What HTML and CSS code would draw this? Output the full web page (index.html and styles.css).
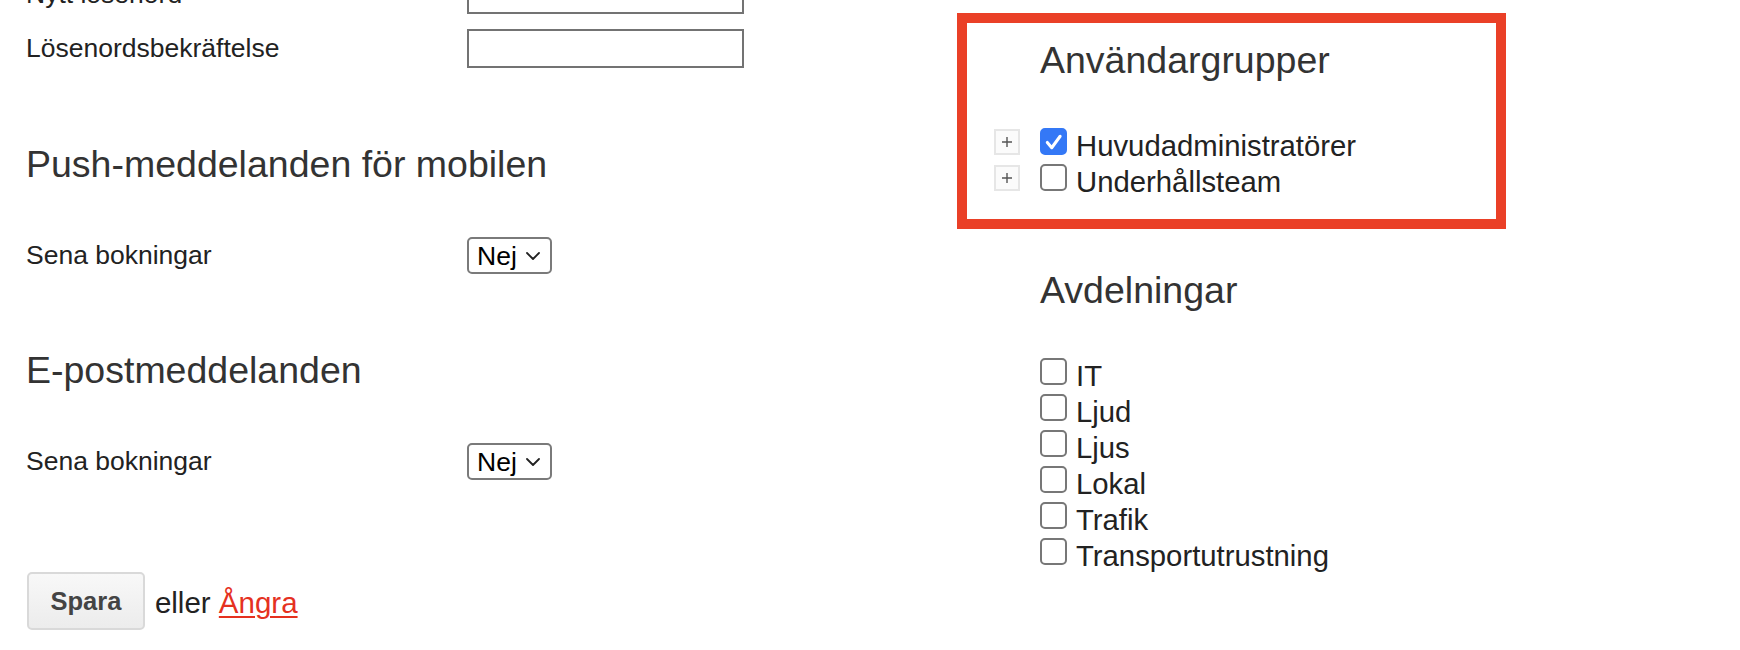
FILE: index.html
```html
<!DOCTYPE html>
<html lang="sv">
<head>
<meta charset="utf-8">
<title>Profilinställningar</title>
<link rel="stylesheet" href="styles.css">
</head>
<body>
<div class="page">
  <div class="main-col">
    <div class="field-row first-row">
      <label class="field-label" for="pw">Nytt lösenord</label>
      <input class="text-input" id="pw" type="password">
    </div>
    <div class="field-row">
      <label class="field-label" for="pw2">Lösenordsbekräftelse</label>
      <input class="text-input" id="pw2" type="password">
    </div>

    <h2 class="section-title">Push-meddelanden för mobilen</h2>
    <div class="field-row">
      <label class="field-label" for="push-late">Sena bokningar</label>
      <div class="select-wrap">
        <select class="select" id="push-late"><option>Nej</option><option>Ja</option></select>
        <svg class="chevron" width="14" height="8" viewBox="0 0 14 8"><path d="M1 1 L7 7 L13 1" fill="none" stroke="#222" stroke-width="1.8" stroke-linecap="round" stroke-linejoin="round"/></svg>
      </div>
    </div>

    <h2 class="section-title">E-postmeddelanden</h2>
    <div class="field-row">
      <label class="field-label" for="mail-late">Sena bokningar</label>
      <div class="select-wrap">
        <select class="select" id="mail-late"><option>Nej</option><option>Ja</option></select>
        <svg class="chevron" width="14" height="8" viewBox="0 0 14 8"><path d="M1 1 L7 7 L13 1" fill="none" stroke="#222" stroke-width="1.8" stroke-linecap="round" stroke-linejoin="round"/></svg>
      </div>
    </div>

    <div class="actions">
      <button class="btn" type="button">Spara</button>
      <span class="or-text">eller <a class="undo" href="#">Ångra</a></span>
    </div>
  </div>

  <div class="side-col">
    <section class="group-box">
      <h2 class="section-title side-title">Användargrupper</h2>
      <ul class="check-list">
        <li class="check-item">
          <span class="expander"><svg width="12" height="12" viewBox="0 0 12 12"><path d="M6 1 V11 M1 6 H11" fill="none" stroke="#555" stroke-width="1.4"/></svg></span>
          <span class="box checked"><svg width="26" height="26" viewBox="0 0 26 26"><path d="M6 13.5 L11 19.5 L20.5 6.5" fill="none" stroke="#fff" stroke-width="3.4" stroke-linecap="round" stroke-linejoin="round"/></svg></span>
          <span class="check-label">Huvudadministratörer</span>
        </li>
        <li class="check-item">
          <span class="expander"><svg width="12" height="12" viewBox="0 0 12 12"><path d="M6 1 V11 M1 6 H11" fill="none" stroke="#555" stroke-width="1.4"/></svg></span>
          <span class="box"></span>
          <span class="check-label">Underhållsteam</span>
        </li>
      </ul>
    </section>

    <section class="dept-section">
      <h2 class="section-title side-title">Avdelningar</h2>
      <ul class="check-list">
        <li class="check-item"><span class="box"></span><span class="check-label">IT</span></li>
        <li class="check-item"><span class="box"></span><span class="check-label">Ljud</span></li>
        <li class="check-item"><span class="box"></span><span class="check-label">Ljus</span></li>
        <li class="check-item"><span class="box"></span><span class="check-label">Lokal</span></li>
        <li class="check-item"><span class="box"></span><span class="check-label">Trafik</span></li>
        <li class="check-item"><span class="box"></span><span class="check-label">Transportutrustning</span></li>
      </ul>
    </section>
  </div>
</div>
</body>
</html>
```

FILE: styles.css
```css
* {
  box-sizing: border-box;
}

html, body {
  margin: 0;
  padding: 0;
  background: #ffffff;
  overflow: hidden;
}

body {
  font-family: "Liberation Sans", Arial, Helvetica, sans-serif;
  font-size: 29px;
  color: #222222;
}

.page {
  display: flex;
  align-items: flex-start;
  padding-left: 26px;
}

.main-col {
  flex: none;
  width: 931px;
  margin-top: -25px;
}

.side-col {
  flex: none;
  width: 549px;
  padding-top: 13px;
}

/* form rows */
.field-row {
  display: flex;
  align-items: center;
  min-height: 37px;
}

.first-row {
  margin-bottom: 15px;
}

.field-label {
  flex: none;
  width: 441px;
  font-size: 26.5px;
  color: #222222;
}

.text-input {
  width: 277px;
  height: 39px;
  border: 2px solid #737373;
  border-radius: 0;
  background: #ffffff;
  padding: 0 6px;
  font: inherit;
  font-size: 26px;
  outline: none;
}

.section-title {
  margin: 75px 0 52px;
  font-size: 37.5px;
  line-height: 42px;
  font-weight: normal;
  color: #333333;
}

/* select */
.select-wrap {
  position: relative;
  width: 85px;
  height: 37px;
}

.select {
  -webkit-appearance: none;
  appearance: none;
  width: 85px;
  height: 37px;
  border: 2px solid #7a7a7a;
  border-radius: 5px;
  background: #ffffff;
  padding: 0 0 0 8px;
  font-family: "Liberation Sans", Arial, Helvetica, sans-serif;
  font-size: 26.5px;
  color: #000000;
  outline: none;
}

.chevron {
  position: absolute;
  right: 12px;
  top: 15px;
  pointer-events: none;
}

/* actions */
.actions {
  display: flex;
  align-items: center;
  margin-top: 92px;
  padding-left: 1px;
}

.btn {
  height: 58px;
  padding: 0 21.5px;
  margin-right: 10px;
  border: 2px solid #d9d9d9;
  border-radius: 5px;
  background: linear-gradient(#f8f8f8, #ececec);
  font-family: "Liberation Sans", Arial, Helvetica, sans-serif;
  font-size: 25.5px;
  font-weight: bold;
  color: #444444;
}

.or-text {
  font-size: 29.5px;
  color: #222222;
  padding-top: 4px;
}

.undo {
  color: #e5311f;
  text-decoration: underline;
  text-decoration-thickness: 2px;
  text-underline-offset: 3px;
}

/* right column */
.group-box {
  border: 10px solid #ea4027;
  padding: 16px 0 19px 73px;
}

.side-title {
  margin: 0 0 47px;
}

.dept-section {
  margin-top: 40px;
  padding-left: 83px;
}

.check-list {
  list-style: none;
  margin: 0;
  padding: 0;
}

.check-item {
  display: flex;
  align-items: flex-start;
  height: 36px;
  line-height: 36px;
  font-size: 29.3px;
  color: #222222;
}

.expander {
  flex: none;
  width: 26px;
  height: 26px;
  margin: 1px 20px 0 -46px;
  border: 2px solid #e6e6e6;
  background: #fbfbfb;
  display: flex;
  align-items: center;
  justify-content: center;
}

.box {
  flex: none;
  width: 27px;
  height: 27px;
  margin: 0 9px 0 0;
  border: 2px solid #777777;
  border-radius: 5px;
  background: #ffffff;
  display: flex;
  align-items: center;
  justify-content: center;
}

.box.checked {
  background: #3478f6;
  border-color: #3478f6;
}

.check-label {
  white-space: nowrap;
}
```
